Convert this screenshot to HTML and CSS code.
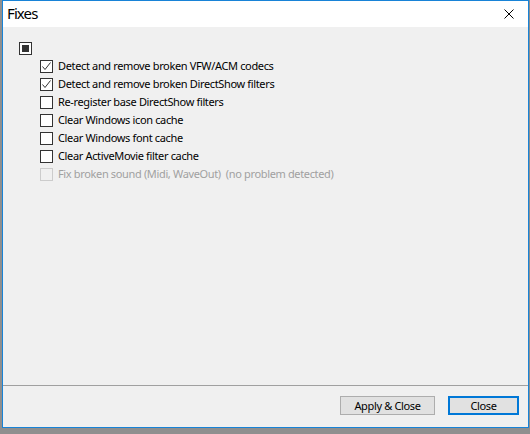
FILE: index.html
```html
<!DOCTYPE html>
<html>
<head>
<meta charset="utf-8">
<link rel="stylesheet" href="styles.css">
</head>
<body>
<div class="window">
  <div class="titlebar">
    <span class="title">Fixes</span>
    <span class="close-x">
      <svg width="10" height="10" viewBox="0 0 10 10"><path d="M0.5 0.5 L9.5 9.5 M9.5 0.5 L0.5 9.5" stroke="#000" stroke-width="1" fill="none"/></svg>
    </span>
  </div>
  <div class="content">
    <div class="tree">
      <div class="row group">
        <span class="box tri"><span class="tri-fill"></span></span>
      </div>
      <div class="row child">
        <span class="box"><svg width="11" height="11" viewBox="0 0 11 11"><path d="M1.5 5.5 L4 8.5 L9.5 1.5" stroke="#333" stroke-width="1" fill="none"/></svg></span>
        <span class="label">Detect and remove broken VFW/ACM codecs</span>
      </div>
      <div class="row child">
        <span class="box"><svg width="11" height="11" viewBox="0 0 11 11"><path d="M1.5 5.5 L4 8.5 L9.5 1.5" stroke="#333" stroke-width="1" fill="none"/></svg></span>
        <span class="label">Detect and remove broken DirectShow filters</span>
      </div>
      <div class="row child">
        <span class="box"></span>
        <span class="label">Re-register base DirectShow filters</span>
      </div>
      <div class="row child">
        <span class="box"></span>
        <span class="label">Clear Windows icon cache</span>
      </div>
      <div class="row child">
        <span class="box"></span>
        <span class="label">Clear Windows font cache</span>
      </div>
      <div class="row child">
        <span class="box"></span>
        <span class="label">Clear ActiveMovie filter cache</span>
      </div>
      <div class="row child disabled">
        <span class="box"></span>
        <span class="label">Fix broken sound (Midi, WaveOut)  (no problem detected)</span>
      </div>
    </div>
    <div class="footer">
      <button class="btn apply">Apply &amp; Close</button>
      <button class="btn close default">Close</button>
    </div>
  </div>
</div>
</body>
</html>
```
FILE: styles.css
```css
* { box-sizing: border-box; }
html, body {
  margin: 0;
  padding: 0;
}
body {
  width: 530px;
  height: 434px;
  background: #8f8f8f;
  font-family: "Noto Sans", "DejaVu Sans", sans-serif;
  font-size: 11px;
  letter-spacing: -0.35px;
  color: #000;
  overflow: hidden;
}
.window {
  margin-left: 2px;
  width: 527px;
  height: 428px;
  border: 1px solid #1883d7;
  display: flex;
  flex-direction: column;
  background: #f0f0f0;
}
.titlebar {
  height: 26px;
  background: #fff;
  display: flex;
  align-items: center;
  justify-content: space-between;
  padding: 0 14px 0 4px;
}
.title {
  font-size: 15px;
  letter-spacing: -0.9px;
  line-height: 26px;
  margin-top: -3px;
}
.close-x {
  display: flex;
  margin-top: -1px;
}
.content {
  flex: 1;
  display: flex;
  flex-direction: column;
}
.tree {
  flex: 1;
  padding-top: 12px;
}
.row {
  height: 18px;
  display: flex;
  align-items: center;
}
.group { padding-left: 16px; }
.child { padding-left: 37px; }
.box {
  width: 13px;
  height: 13px;
  border: 1px solid #333;
  background: #fff;
  display: flex;
  align-items: center;
  justify-content: center;
  flex: none;
}
.tri-fill {
  width: 7px;
  height: 7px;
  background: #333;
}
.label {
  margin-left: 5px;
  white-space: pre;
  line-height: 18px;
}
.disabled .box {
  border-color: #cccccc;
  background: #f0f0f0;
}
.disabled .label { color: #a0a0a0; }
.footer {
  border-top: 1px solid #a0a0a0;
  height: 42px;
  display: flex;
  justify-content: flex-end;
  align-items: flex-start;
  padding: 10px 9px 0 0;
  gap: 13px;
}
.btn {
  font-family: inherit;
  font-size: 11px;
  letter-spacing: -0.35px;
  height: 19px;
  padding: 0;
  background: #e1e1e1;
  border: 1px solid #adadad;
  color: #000;
  line-height: 15px;
}
.apply { width: 95px; }
.close { width: 71px; }
.default { border: 2px solid #0078d7; }
```
